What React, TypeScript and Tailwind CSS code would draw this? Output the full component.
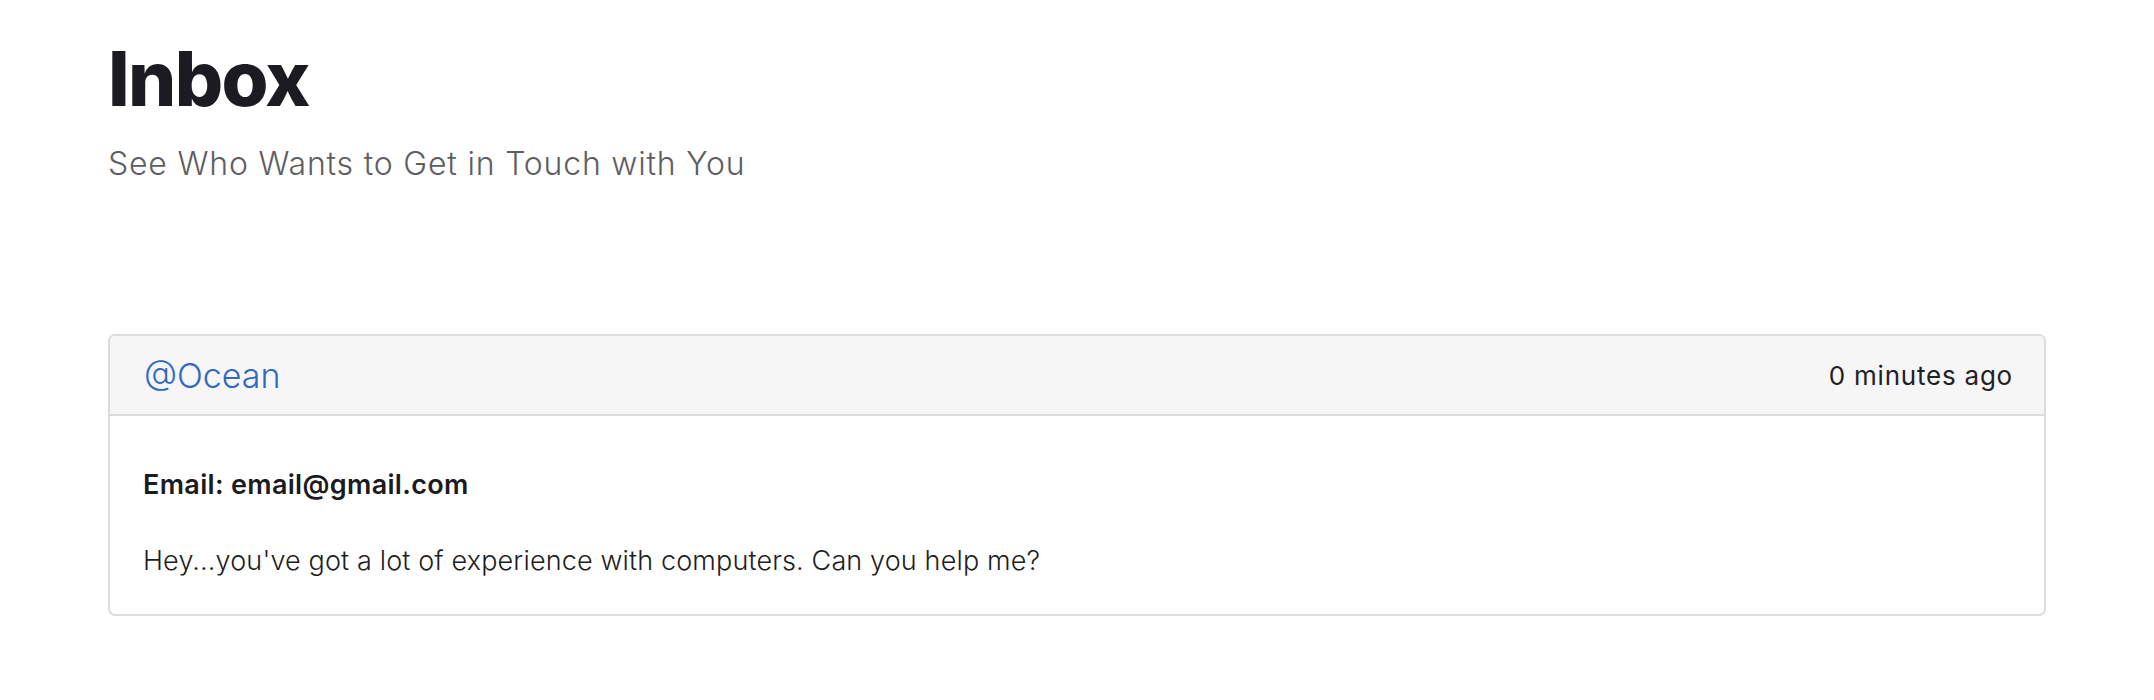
export default function App() {
  return (
    <main className="min-h-screen bg-white px-[108px] pt-[40px] font-['Inter','Liberation_Sans',sans-serif]">
      <h1 className="text-[76px] leading-[76px] font-extrabold tracking-[-0.022em] text-[#1b1b21]">Inbox</h1>
      <p className="mt-[32px] text-[32px] leading-[32px] font-light tracking-[0.025em] text-[#5e5e62]">
        See Who Wants to Get in Touch with You
      </p>

      <div className="mt-[154px] rounded-[7px] border-2 border-[#dcdcdc] overflow-hidden">
        <div className="flex h-[80px] items-center justify-between border-b-2 border-[#dcdcdc] bg-[#f6f6f6] pl-[34px] pr-[31px]">
          <span className="text-[34px] font-light text-[#3068c2]">@Ocean</span>
          <span className="text-[26px] tracking-[0.03em] text-[#222226]">0 minutes ago</span>
        </div>
        <div className="px-[33px] pt-[55px] pb-[40px]">
          <p className="text-[27px] leading-[27px] font-semibold tracking-[0.012em] text-[#1b1b21]">Email: email@gmail.com</p>
          <p className="mt-[49px] text-[27px] leading-[27px] font-light tracking-[0.005em] text-[#1e1e22]">
            Hey...you've got a lot of experience with computers. Can you help me?
          </p>
        </div>
      </div>
    </main>
  );
}
